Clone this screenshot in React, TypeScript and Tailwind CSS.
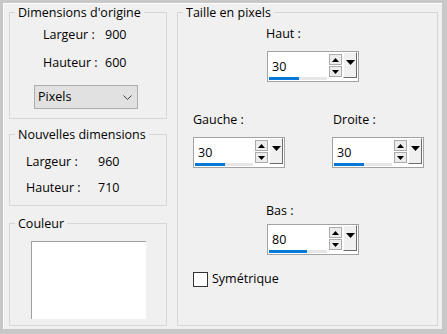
import type { ReactNode } from "react";

function UpTriangle({ w, h }: { w: number; h: number }) {
  return (
    <svg width={w} height={h} viewBox={`0 0 ${w} ${h}`} className="block">
      <polygon points={`0,${h} ${w / 2},0 ${w},${h}`} fill="#000" />
    </svg>
  );
}

function DownTriangle({ w, h }: { w: number; h: number }) {
  return (
    <svg width={w} height={h} viewBox={`0 0 ${w} ${h}`} className="block">
      <polygon points={`0,0 ${w},0 ${w / 2},${h}`} fill="#000" />
    </svg>
  );
}

function Group({ title, className, children }: { title: string; className: string; children: ReactNode }) {
  return (
    <fieldset className={`border border-[#d6d6d6] ${className}`}>
      <legend className="ml-[5px] px-[3px] leading-[19px]">{title}</legend>
      {children}
    </fieldset>
  );
}

function Spinner({ value, fill }: { value: string; fill: number }) {
  return (
    <div className="flex h-[31px] w-[92px] border border-[#a3a3a3] bg-white">
      <div className="flex w-[60px] flex-col">
        <div className="flex-1 pl-[4px] pt-[6px] leading-[18px]">{value}</div>
        <div className="mb-px ml-px flex h-[3px] w-[58px] bg-[#e6e6e6]">
          <div className="h-full bg-[#0078d7]" style={{ width: fill }} />
        </div>
      </div>
      <div className="ml-px flex w-[13px] flex-col gap-px pt-[2px]">
        <div className="flex h-[11px] items-center justify-center border border-[#ababab] bg-[#ececec]">
          <UpTriangle w={7} h={4} />
        </div>
        <div className="flex h-[11px] items-center justify-center border border-[#ababab] bg-[#ececec]">
          <DownTriangle w={7} h={4} />
        </div>
      </div>
      <div className="ml-px flex h-[26px] w-[14px] justify-center border border-b-[#6b6b6b] border-l-white border-r-[#6b6b6b] border-t-white bg-[#f0f0f0] pt-[7px]">
        <DownTriangle w={9} h={5} />
      </div>
    </div>
  );
}

export default function App() {
  return (
    <div className="h-[334px] w-[447px] bg-[#c8c8c8] pl-[3px] pt-[3px] font-['Open_Sans',sans-serif] text-[12.5px] text-black">
      <div className="flex h-[326px] w-[439px] gap-[10px] bg-[#f0f0f0] pl-[6px] shadow-[inset_1px_1px_0_#fff]">
        <div className="flex w-[158px] flex-col">
          <Group title="Dimensions d'origine" className="w-[158px] pb-[9px]">
            <div className="ml-[33px] mt-[4px] flex leading-[18px]">
              <span className="w-[62px]">Largeur :</span>
              <span>900</span>
            </div>
            <div className="ml-[33px] mt-[10px] flex leading-[18px]">
              <span className="w-[62px]">Hauteur :</span>
              <span>600</span>
            </div>
            <div className="ml-[24px] mt-[13px] flex h-[24px] w-[104px] items-center justify-between border border-[#adadad] bg-[#e1e1e1] pl-[3px] pr-[5px]">
              <span className="leading-[18px]">Pixels</span>
              <svg width="9" height="5" viewBox="0 0 9 5" className="block">
                <polyline points="0.5,0.5 4.5,4.5 8.5,0.5" fill="none" stroke="#404040" strokeWidth="1" />
              </svg>
            </div>
          </Group>
          <Group title="Nouvelles dimensions" className="mt-[6px] w-[158px] pb-[8px]">
            <div className="ml-[16px] mt-[9px] flex leading-[18px]">
              <span className="w-[72px]">Largeur :</span>
              <span>960</span>
            </div>
            <div className="ml-[16px] mt-[8px] flex leading-[18px]">
              <span className="w-[72px]">Hauteur :</span>
              <span>710</span>
            </div>
          </Group>
          <Group title="Couleur" className="mt-[8px] w-[158px] pb-[6px]">
            <div className="ml-[21px] mt-[8px] h-[78px] w-[115px] border-l border-t border-[#a0a0a0] bg-white" />
          </Group>
        </div>
        <Group title="Taille en pixels" className="h-[323px] w-[261px]">
          <div className="ml-[88px] mt-[3px] leading-[18px]">Haut :</div>
          <div className="ml-[89px] mt-[8px]">
            <Spinner value="30" fill={30} />
          </div>
          <div className="ml-[15px] mt-[29px] flex gap-[47px]">
            <div className="flex flex-col">
              <div className="leading-[18px]">Gauche :</div>
              <div className="mt-[8px]">
                <Spinner value="30" fill={30} />
              </div>
            </div>
            <div className="flex flex-col">
              <div className="ml-px leading-[18px]">Droite :</div>
              <div className="mt-[8px]">
                <Spinner value="30" fill={30} />
              </div>
            </div>
          </div>
          <div className="ml-[88px] mt-[34px] leading-[18px]">Bas :</div>
          <div className="ml-[89px] mt-[4px]">
            <Spinner value="80" fill={38} />
          </div>
          <div className="ml-[15px] mt-[15px] flex items-center gap-[4px]">
            <div className="h-[15px] w-[15px] border border-[#333] bg-white" />
            <span className="leading-[18px]">Symétrique</span>
          </div>
        </Group>
      </div>
    </div>
  );
}
